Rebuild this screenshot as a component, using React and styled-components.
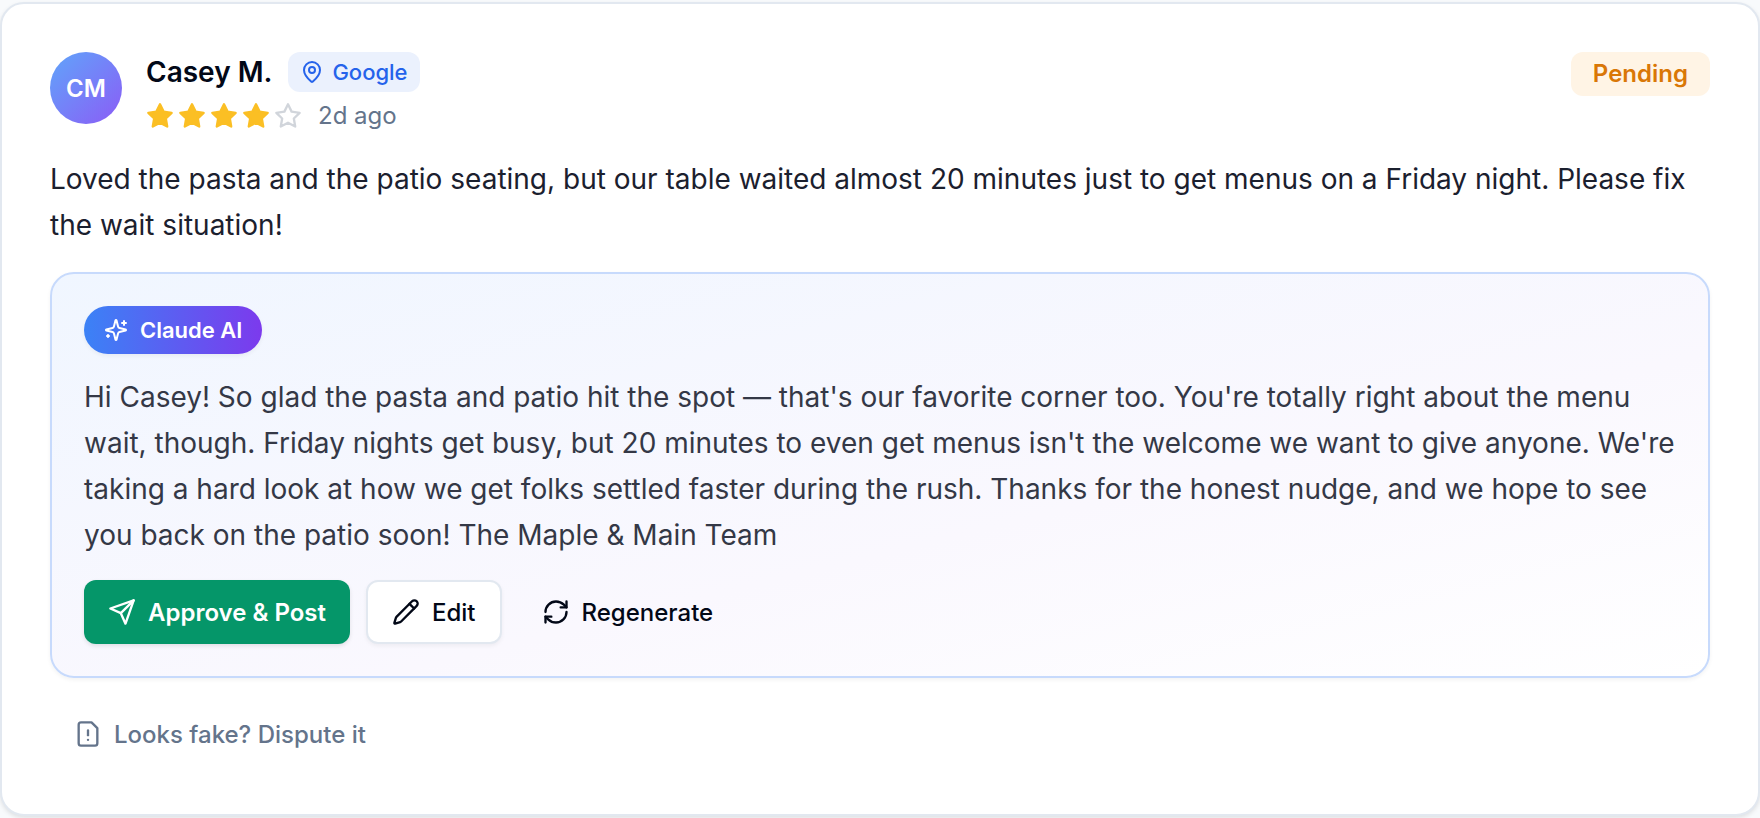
import React from 'react';
import styled, { createGlobalStyle, css } from 'styled-components';
import { MapPin, Pencil, RefreshCw } from 'lucide-react';

const GlobalStyle = createGlobalStyle`
  * {
    box-sizing: border-box;
  }

  body {
    margin: 0;
    padding: 2px 0;
    background: #f8fafc;
    color: #020817;
    font-family: Inter, "Liberation Sans", sans-serif;
    -webkit-font-smoothing: antialiased;
  }
`;

const Card = styled.article`
  display: flex;
  flex-direction: column;
  gap: 24px;
  padding: 48px;
  background: #fff;
  border: 2px solid #e2e8f0;
  border-radius: 24px;
  box-shadow: 0 2px 4px rgba(0, 0, 0, 0.1);
`;

const Header = styled.header`
  display: flex;
  align-items: flex-start;
  gap: 24px;
`;

const Avatar = styled.div`
  display: flex;
  align-items: center;
  justify-content: center;
  width: 72px;
  height: 72px;
  border-radius: 50%;
  background: linear-gradient(135deg, #60a5fa, #8b5cf6);
  color: #fff;
  font-size: 24px;
  font-weight: 600;
`;

const Author = styled.div`
  display: flex;
  flex: 1;
  flex-direction: column;
  gap: 8px;
`;

const Line = styled.div`
  display: flex;
  align-items: center;
  gap: 16px;
`;

const Name = styled.h2`
  margin: 0;
  font-size: 28px;
  font-weight: 600;
  line-height: 40px;
`;

const Source = styled.span`
  display: flex;
  align-items: center;
  gap: 8px;
  height: 40px;
  padding: 0 12px;
  border-radius: 12px;
  background: #ebf1fd;
  color: #2563eb;
  font-size: 22px;
  font-weight: 500;
`;

const Stars = styled.div`
  display: flex;
  gap: 4px;
`;

const Icon = styled.svg.attrs({ viewBox: '0 0 24 24', 'aria-hidden': true })`
  flex: none;
  width: ${(props) => props.$size}px;
  height: ${(props) => props.$size}px;
  fill: none;
  stroke: currentColor;
  stroke-width: 2;
  stroke-linecap: round;
  stroke-linejoin: round;
`;

const RatingStar = styled(Icon)`
  color: ${(props) => (props.$filled ? '#fbbf24' : '#d1d5db')};
  fill: ${(props) => (props.$filled ? '#fbbf24' : 'none')};
`;

const Time = styled.time`
  color: #64748b;
  font-size: 24px;
  line-height: 32px;
`;

const Status = styled.span`
  padding: 6px 22px;
  border-radius: 12px;
  background: #fff4e5;
  color: #d97706;
  font-size: 24px;
  font-weight: 600;
  line-height: 32px;
`;

const Text = styled.p`
  margin: 0;
  color: ${(props) => (props.$reply ? '#343846' : '#1b202e')};
  font-size: 28px;
  line-height: 46px;
`;

const Reply = styled.section`
  display: flex;
  flex-direction: column;
  gap: 20px;
  padding: 32px;
  border: 2px solid #c7dafc;
  border-radius: 24px;
  background: linear-gradient(to bottom right, #f0f6ff, #faf8fe 60%, #fff);
  box-shadow: 0 2px 4px rgba(0, 0, 0, 0.05);
`;

const AiTag = styled.span`
  display: flex;
  align-items: center;
  align-self: flex-start;
  gap: 12px;
  height: 48px;
  padding: 0 20px;
  border-radius: 24px;
  background: linear-gradient(to right, #3b82f6, #7c3aed);
  box-shadow: 0 2px 4px rgba(0, 0, 0, 0.05);
  color: #fff;
  font-size: 22px;
  font-weight: 600;
`;

const Actions = styled.div`
  display: flex;
  flex-wrap: wrap;
  gap: 16px;
  padding-top: 2px;
`;

const variants = {
  primary: css`
    background: #059669;
    color: #fff;
    font-weight: 600;
    box-shadow: 0 2px 4px rgba(0, 0, 0, 0.1);
  `,
  outline: css`
    background: #fff;
    border: 2px solid #e2e8f0;
    box-shadow: 0 2px 4px rgba(0, 0, 0, 0.05);
  `,
  ghost: css``,
  muted: css`
    align-self: flex-start;
    color: #64748b;
  `,
};

const Button = styled.button`
  display: flex;
  align-items: center;
  gap: 12px;
  height: 64px;
  padding: 0 24px;
  border: 0;
  border-radius: 12px;
  background: transparent;
  color: #020817;
  font-family: inherit;
  font-size: 24px;
  font-weight: 500;
  cursor: pointer;
  ${(props) => variants[props.$variant]}
`;

const review = {
  initials: 'CM',
  name: 'Casey M.',
  source: 'Google',
  rating: 4,
  time: '2d ago',
  status: 'Pending',
  text: 'Loved the pasta and the patio seating, but our table waited almost 20 minutes just to get menus on a Friday night. Please fix the wait situation!',
  reply:
    "Hi Casey! So glad the pasta and patio hit the spot — that's our favorite corner too. You're totally right about the menu wait, though. Friday nights get busy, but 20 minutes to even get menus isn't the welcome we want to give anyone. We're taking a hard look at how we get folks settled faster during the rush. Thanks for the honest nudge, and we hope to see you back on the patio soon! The Maple & Main Team",
};

function SparklesIcon() {
  return (
    <Icon $size={24}>
      <path d="M9.937 15.5A2 2 0 0 0 8.5 14.063l-6.135-1.582a.5.5 0 0 1 0-.962L8.5 9.936A2 2 0 0 0 9.937 8.5l1.582-6.135a.5.5 0 0 1 .963 0L14.063 8.5A2 2 0 0 0 15.5 9.937l6.135 1.581a.5.5 0 0 1 0 .964L15.5 14.063a2 2 0 0 0-1.437 1.437l-1.582 6.135a.5.5 0 0 1-.963 0z" />
      <path d="M20 3v4" />
      <path d="M22 5h-4" />
      <path d="M4 17v2" />
      <path d="M5 18H3" />
    </Icon>
  );
}

function SendIcon() {
  return (
    <Icon $size={28}>
      <path d="m22 2-7 20-4-9-9-4Z" />
      <path d="M22 2 11 13" />
    </Icon>
  );
}

function DisputeIcon() {
  return (
    <Icon $size={28}>
      <path d="M15 2H6a2 2 0 0 0-2 2v16a2 2 0 0 0 2 2h12a2 2 0 0 0 2-2V7Z" />
      <path d="M12 9v4" />
      <path d="M12 17h.01" />
    </Icon>
  );
}

function Rating({ value }) {
  return (
    <Stars role="img" aria-label={`${value} / 5`}>
      {[1, 2, 3, 4, 5].map((n) => (
        <RatingStar key={n} $size={28} $filled={n <= value}>
          <polygon points="12 2 15.09 8.26 22 9.27 17 14.14 18.18 21.02 12 17.77 5.82 21.02 7 14.14 2 9.27 8.91 8.26 12 2" />
        </RatingStar>
      ))}
    </Stars>
  );
}

function App() {
  return (
    <>
      <GlobalStyle />
      <Card>
        <Header>
          <Avatar>{review.initials}</Avatar>
          <Author>
            <Line>
              <Name>{review.name}</Name>
              <Source>
                <MapPin size={24} />
                {review.source}
              </Source>
            </Line>
            <Line>
              <Rating value={review.rating} />
              <Time>{review.time}</Time>
            </Line>
          </Author>
          <Status>{review.status}</Status>
        </Header>

        <Text>{review.text}</Text>

        <Reply>
          <AiTag>
            <SparklesIcon />
            Claude AI
          </AiTag>
          <Text $reply>{review.reply}</Text>
          <Actions>
            <Button type="button" $variant="primary">
              <SendIcon />
              Approve &amp; Post
            </Button>
            <Button type="button" $variant="outline">
              <Pencil size={28} />
              Edit
            </Button>
            <Button type="button" $variant="ghost">
              <RefreshCw size={28} />
              Regenerate
            </Button>
          </Actions>
        </Reply>

        <Button type="button" $variant="muted">
          <DisputeIcon />
          Looks fake? Dispute it
        </Button>
      </Card>
    </>
  );
}

export default App;
